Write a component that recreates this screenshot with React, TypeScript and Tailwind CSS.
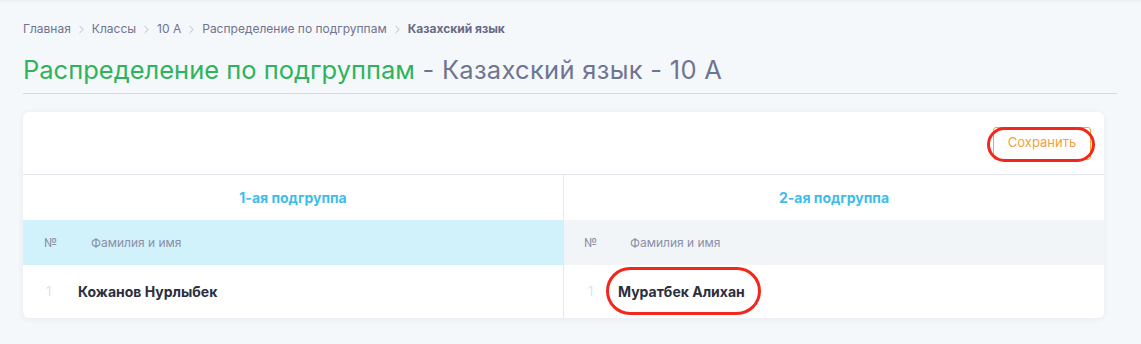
import { ChevronRight } from 'lucide-react';

const crumbs = ['Главная', 'Классы', '10 А', 'Распределение по подгруппам'];

type Group = {
  title: string;
  headBg: string;
  numW: string;
  oneW: string;
  student: string;
  marked?: boolean;
};

const groups: Group[] = [
  {
    title: '1-ая подгруппа',
    headBg: 'bg-[#d1f1fb]',
    numW: 'w-[68px] pl-[21px]',
    oneW: 'w-[55px] pl-[23px]',
    student: 'Кожанов Нурлыбек',
  },
  {
    title: '2-ая подгруппа',
    headBg: 'bg-[#f2f5f8]',
    numW: 'w-[66px] pl-[20px]',
    oneW: 'w-[54px] pl-[24px]',
    student: 'Муратбек Алихан',
    marked: true,
  },
];

function GroupColumn({ g, last }: { g: Group; last?: boolean }) {
  return (
    <div className={last ? 'flex-1' : 'flex-1 border-r border-[#e4e7ee]'}>
      <div className="h-[45px] flex items-center justify-center text-[14px] font-bold text-[#3ebdea]">
        {g.title}
      </div>
      <div className={`h-[45px] flex items-center text-[12px] text-[#8b8fa8] ${g.headBg}`}>
        <span className={g.numW}>№</span>
        <span>Фамилия и имя</span>
      </div>
      <div className="h-[53px] flex items-center">
        <span className={`${g.oneW} text-[13px] text-[#dfe2e8]`}>1</span>
        <span className="relative text-[14px] font-bold text-[#2c2e3e]">
          {g.student}
          {g.marked && (
            <span className="absolute -left-[12px] -right-[16px] -top-[14px] -bottom-[13px] rounded-full border-[3px] border-[#f2261b]" />
          )}
        </span>
      </div>
    </div>
  );
}

export default function App() {
  return (
    <div
      className="min-h-[344px] bg-[#f5f8fb] px-[23px] pt-[21px] pb-[26px] shadow-[inset_0_3px_3px_-2px_rgba(0,0,0,0.06)]"
      style={{ fontFamily: 'Inter, "Liberation Sans", Arial, sans-serif' }}
    >
      {/* Breadcrumbs */}
      <div className="flex items-center h-[16px] text-[12px] text-[#6f7390]">
        {crumbs.map((c) => (
          <span key={c} className="flex items-center">
            <span>{c}</span>
            <ChevronRight className="h-[13px] w-[13px] mx-[4px] text-[#a9adbf]" strokeWidth={1.5} />
          </span>
        ))}
        <span className="font-bold text-[#676c86]">Казахский язык</span>
      </div>

      {/* Title */}
      <div className="mr-[1px] mt-[18px] pb-[8px] border-b border-[#d6dae2] text-[25.5px] leading-[30px]">
        <span className="text-[#2eb35d]">Распределение по подгруппам</span>
        <span className="text-[#6f7591] whitespace-pre tracking-[0.3px]"> - Казахский язык - 10 А</span>
      </div>

      {/* Card */}
      <div className="mt-[18px] mr-[14px] bg-white rounded-[6px] shadow-[0_1px_6px_rgba(69,65,78,0.08)]">
        <div className="h-[63px] flex items-center justify-end pr-[13px] border-b border-[#e2e5ec]">
          <button className="relative h-[33px] w-[98px] rounded-[3px] border border-[#f5a63d] text-[13px] text-[#f5a03a] bg-white">
            Сохранить
            <span className="absolute -left-[7px] -right-[5px] -top-[1px] -bottom-[3px] rounded-full border-[3px] border-[#f2261b]" />
          </button>
        </div>
        <div className="flex">
          {groups.map((g, i) => (
            <GroupColumn key={g.title} g={g} last={i === groups.length - 1} />
          ))}
        </div>
      </div>
    </div>
  );
}
